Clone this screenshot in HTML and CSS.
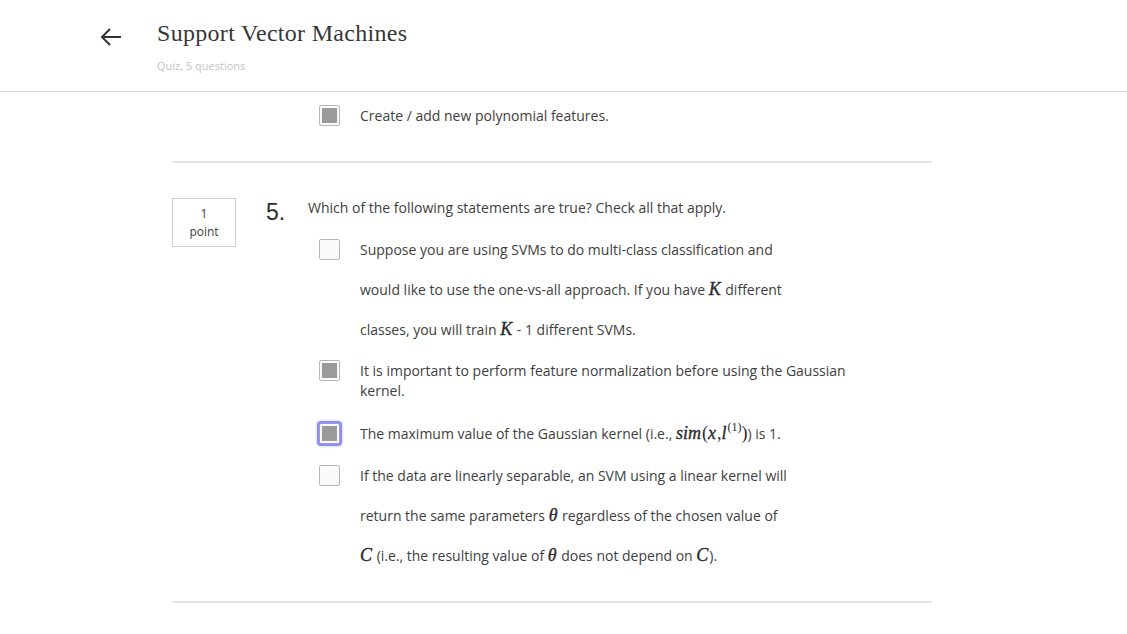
FILE: index.html
```html
<!DOCTYPE html>
<html>
<head>
<meta charset="utf-8">
<link rel="stylesheet" href="styles.css">
</head>
<body>
<header class="top">
  <div class="back">
    <svg width="24" height="20" viewBox="0 0 24 20"><path d="M22 10H3M11 2L3 10l8 8" fill="none" stroke="#333" stroke-width="2"/></svg>
  </div>
  <div class="titles">
    <h1 class="title">Support Vector Machines</h1>
    <div class="sub">Quiz, 5 questions</div>
  </div>
</header>
<main class="content">
  <div class="prev">
    <div class="opt opt-short">
      <span class="box checked"></span>
      <div class="otext"><div class="ln">Create / add new polynomial features.</div></div>
    </div>
  </div>
  <hr class="divider">
  <section class="question">
    <div class="points"><div>1</div><div>point</div></div>
    <div class="num">5.</div>
    <div class="qbody">
      <div class="qtext">Which of the following statements are true? Check all that apply.</div>
      <div class="opts">
        <div class="opt opt-tall">
          <span class="box"></span>
          <div class="otext">
            <div class="ln">Suppose you are using SVMs to do multi-class classification and</div>
            <div class="ln">would like to use the one-vs-all approach. If you have <i class="m">K</i> different</div>
            <div class="ln">classes, you will train <i class="m">K</i> - 1 different SVMs.</div>
          </div>
        </div>
        <div class="opt opt-short gap11">
          <span class="box checked"></span>
          <div class="otext">
            <div class="ln">It is important to perform feature normalization before using the Gaussian</div>
            <div class="ln">kernel.</div>
          </div>
        </div>
        <div class="opt opt-mid gap20">
          <span class="box checked focus"></span>
          <div class="otext">
            <div class="ln">The maximum value of the Gaussian kernel (i.e., <i class="m">sim</i><span class="mr">(</span><i class="m">x</i><span class="mr">,</span><i class="m">l</i><sup class="msup">(1)</sup><span class="mr">)</span>) is 1.</div>
          </div>
        </div>
        <div class="opt opt-tall gap9">
          <span class="box"></span>
          <div class="otext">
            <div class="ln">If the data are linearly separable, an SVM using a linear kernel will</div>
            <div class="ln">return the same parameters <i class="m">θ</i> regardless of the chosen value of</div>
            <div class="ln"><i class="m">C</i> (i.e., the resulting value of <i class="m">θ</i> does not depend on <i class="m">C</i>).</div>
          </div>
        </div>
      </div>
    </div>
  </section>
  <hr class="divider">
  <div class="next"><span class="nextmark"></span></div>
</main>
</body>
</html>
```
FILE: styles.css
```css
html, body {
  margin: 0;
  padding: 0;
  background: #fff;
  overflow: hidden;
}
body {
  font-family: "Open Sans", "Liberation Sans", sans-serif;
  color: #404040;
  width: 1127px;
  height: 634px;
}
.top {
  border-bottom: 1px solid #d9d9d9;
  display: flex;
  align-items: flex-start;
  box-sizing: border-box;
  height: 92px;
  padding-left: 99px;
}
.back {
  width: 24px;
  height: 20px;
  margin-top: 27px;
}
.back svg { display: block; }
.titles {
  margin-left: 34px;
  padding-top: 19px;
}
.title {
  margin: 0;
  font-family: "Liberation Serif", "DejaVu Serif", serif;
  font-weight: normal;
  font-size: 24px;
  line-height: 28px;
  color: #373737;
  letter-spacing: 0.3px;
}
.sub {
  margin-top: 12px;
  font-size: 11px;
  line-height: 14px;
  color: #c4c4c4;
}
.content {
  margin-left: 172px;
  width: 760px;
  padding-top: 14px;
}
.prev {
  padding-left: 147px;
}
.divider {
  border: 0;
  height: 2px;
  background: #e2e2e2;
  margin: 0;
}
.prev + .divider { margin-top: 35px; }
.question {
  display: flex;
  align-items: flex-start;
  margin-top: 35px;
}
.points {
  width: 64px;
  height: 49px;
  box-sizing: border-box;
  border: 1px solid #cfcfcf;
  font-size: 12px;
  line-height: 18px;
  text-align: center;
  color: #404040;
  padding-top: 6px;
}
.num {
  margin-left: 30px;
  width: 42px;
  font-family: "Liberation Sans", Arial, sans-serif;
  font-size: 23px;
  line-height: 26px;
  margin-top: 1px;
  color: #2d2d2d;
}
.qbody { flex: 1; }
.qtext {
  font-size: 14px;
  line-height: 20px;
}
.opts {
  margin-top: 12px;
  padding-left: 11px;
}
.opt {
  display: flex;
  align-items: flex-start;
  font-size: 14px;
}
.otext {
  margin-left: 20px;
  white-space: nowrap;
}
.box {
  flex: none;
  width: 21px;
  height: 21px;
  box-sizing: border-box;
  border: 1px solid #b8b8b8;
  border-radius: 2px;
  background: #fafafa;
  position: relative;
}
.box.checked::after {
  content: "";
  position: absolute;
  left: 2px;
  top: 2px;
  right: 2px;
  bottom: 2px;
  background: #9b9b9b;
}
.box.focus {
  box-shadow: 0 0 0 2px #8f8ff0, 0 0 3px 2px #b7b7f5;
  border-color: #9a9ae8;
}
.opt-tall .ln { line-height: 40px; height: 40px; }
.opt-tall .box { margin-top: 9px; }
.opt-short .ln { line-height: 20px; height: 20px; }
.opt-short .box { margin-top: -1px; }
.opt-mid .ln { line-height: 28px; height: 28px; }
.opt-mid .box { margin-top: 3px; }
.gap11 { margin-top: 11px; }
.gap20 { margin-top: 19px; }
.gap9 { margin-top: 8px; }
.m {
  font-family: "Liberation Serif", "DejaVu Serif", serif;
  font-style: italic;
  font-size: 18px;
  line-height: 1;
  color: #2a2a2a;
  -webkit-text-stroke: 0.35px #2a2a2a;
  padding-right: 1px;
}
.mr {
  font-family: "Liberation Serif", serif;
  font-size: 18px;
  line-height: 1;
  color: #2a2a2a;
}
.msup {
  font-family: "Liberation Serif", serif;
  font-size: 12px;
  line-height: 0;
  color: #2a2a2a;
  vertical-align: 8px;
}
.question + .divider { margin-top: 25px; }
.next {
  margin-top: 31px;
  height: 10px;
}
.nextmark {
  display: block;
  width: 18px;
  border-top: 1px solid #666;
}
```
